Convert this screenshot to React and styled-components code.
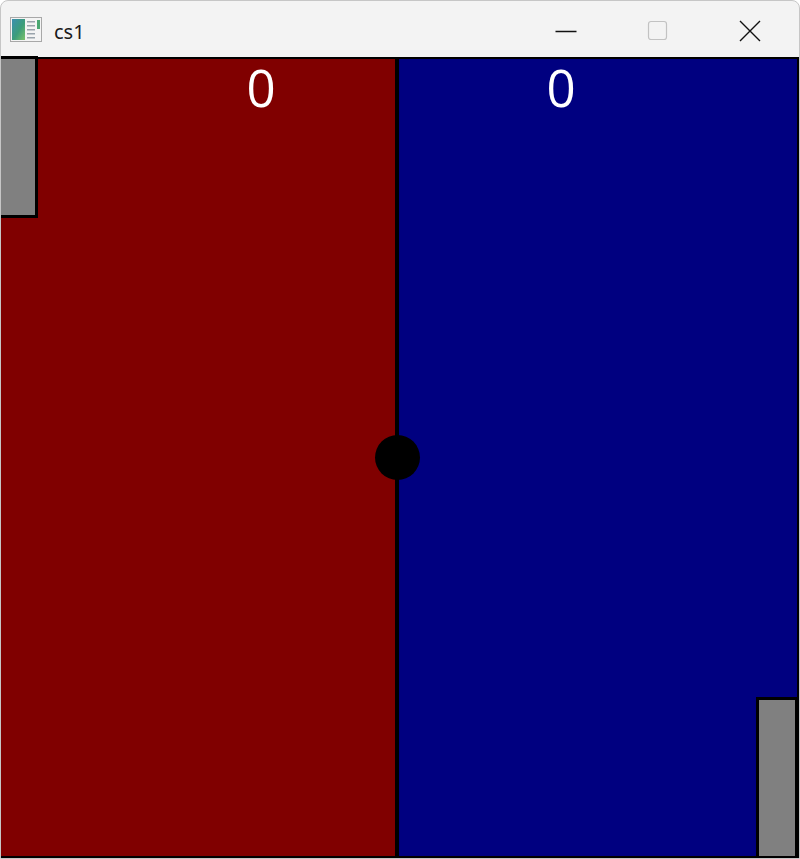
import styled, { createGlobalStyle } from "styled-components";

const Global = createGlobalStyle`
  html, body { margin: 0; padding: 0; background: #ffffff; }
  body { font-family: "Noto Sans", "Open Sans", sans-serif; }
`;

const Window = styled.div`
  box-sizing: border-box;
  width: 800px;
  height: 859px;
  display: flex;
  flex-direction: column;
  background: #f3f3f3;
  border: 1px solid #c6c6c6;
  border-radius: 8px 8px 0 0;
  overflow: hidden;
`;

const TitleBar = styled.div`
  height: 56px;
  flex: none;
  display: flex;
  align-items: center;
  padding-left: 9px;
`;

const Title = styled.span`
  margin-left: 12px;
  font-size: 20px;
  color: #1a1a1a;
  flex: 1;
  padding-top: 4px;
`;

const Controls = styled.div`
  display: flex;
  height: 100%;
  padding: 3px 3px 0 0;
  box-sizing: border-box;
`;

const CtrlButton = styled.div`
  width: 92px;
  display: flex;
  align-items: center;
  justify-content: center;
`;

const Game = styled.div`
  position: relative;
  flex: 1;
  display: flex;
  border-top: 2px solid #000;
  border-right: 2px solid #000;
  border-bottom: 2px solid #000;
`;

const Half = styled.div`
  flex: ${(p) => (p.$side === "left" ? "0 0 394px" : "1")};
  background: ${(p) => (p.$side === "left" ? "#800000" : "#000080")};
`;

const Divider = styled.div`
  flex: 0 0 4px;
  background: #000;
`;

const Score = styled.div`
  position: absolute;
  top: -2px;
  transform: translateX(-50%);
  color: #fff;
  font-family: "Open Sans", "Noto Sans", sans-serif;
  font-size: 51px;
  line-height: 60px;
`;

const Paddle = styled.div`
  position: absolute;
  box-sizing: border-box;
  background: #808080;
  border: 3px solid #000;
`;

const Ball = styled.div`
  position: absolute;
  width: 45px;
  height: 45px;
  border-radius: 50%;
  background: #000;
`;

const AppIcon = () => (
  <svg width="32" height="25" viewBox="0 0 32 25">
    <defs>
      <linearGradient id="g" x1="0" y1="0" x2="1" y2="1">
        <stop offset="0" stopColor="#3d8fb0" />
        <stop offset="0.55" stopColor="#3c9d7a" />
        <stop offset="1" stopColor="#7cc26a" />
      </linearGradient>
    </defs>
    <rect x="0.5" y="0.5" width="31" height="24" fill="#f4f4f4" stroke="#a8a8a8" />
    <rect x="2" y="2" width="13" height="21" fill="url(#g)" />
    <rect x="17" y="4" width="8" height="1.5" fill="#9aa4ac" />
    <rect x="17" y="8" width="8" height="1.5" fill="#9aa4ac" />
    <rect x="17" y="12" width="8" height="1.5" fill="#9aa4ac" />
    <rect x="17" y="16" width="8" height="1.5" fill="#9aa4ac" />
    <rect x="17" y="20" width="8" height="1.5" fill="#9aa4ac" />
    <rect x="27" y="3" width="3" height="9" fill="#4aa872" />
  </svg>
);

export default function App() {
  return (
    <>
      <Global />
      <Window>
        <TitleBar>
          <AppIcon />
          <Title>cs1</Title>
          <Controls>
            <CtrlButton>
              <svg width="22" height="22" viewBox="0 0 22 22">
                <line x1="0.5" y1="11.5" x2="21.5" y2="11.5" stroke="#111" strokeWidth="1.3" />
              </svg>
            </CtrlButton>
            <CtrlButton>
              <svg width="22" height="22" viewBox="0 0 22 22">
                <rect x="1.5" y="1.5" width="18" height="18" rx="2.5" fill="none" stroke="#c2c2c2" strokeWidth="1.2" />
              </svg>
            </CtrlButton>
            <CtrlButton>
              <svg width="22" height="22" viewBox="0 0 22 22">
                <path d="M1 1 L21 21 M21 1 L1 21" stroke="#111" strokeWidth="1.4" />
              </svg>
            </CtrlButton>
          </Controls>
        </TitleBar>
        <Game>
          <Half $side="left" />
          <Divider />
          <Half $side="right" />
          <Score style={{ left: 260 }}>0</Score>
          <Score style={{ left: 560 }}>0</Score>
          <Paddle style={{ left: -3, top: -3, width: 40, height: 162 }} />
          <Paddle style={{ left: 755, top: 638, width: 42, height: 162 }} />
          <Ball style={{ left: 374, top: 376 }} />
        </Game>
      </Window>
    </>
  );
}
